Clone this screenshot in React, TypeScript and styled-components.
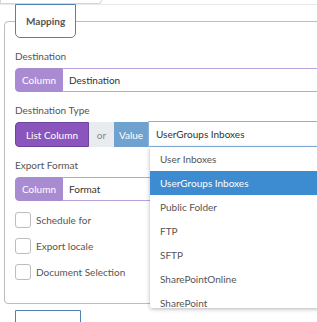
import styled, { createGlobalStyle } from "styled-components";

const GlobalStyle = createGlobalStyle`
    html, body {
        margin: 0;
        padding: 0;
        background: #fff;
        overflow: hidden;
    }
    body {
        font-family: Lato, "Open Sans", sans-serif;
        font-size: 10px;
        color: #555;
    }
`

const destinations = [
    "User Inboxes",
    "UserGroups Inboxes",
    "Public Folder",
    "FTP",
    "SFTP",
    "SharePointOnline",
    "SharePoint",
    "Dropbox",
]

export default function App() {
    return <Page>
        <GlobalStyle />
        <TopStrip>
            <PrevCard />
        </TopStrip>

        <Section>
            <Legend>Mapping</Legend>

            <Field>
                <Label>Destination</Label>
                <InputGroup>
                    <Addon>Column</Addon>
                    <TextInput>Destination</TextInput>
                </InputGroup>
            </Field>

            <Field>
                <Label>Destination Type</Label>
                <InputGroup $tall>
                    <ToggleButton $variant="list">List Column</ToggleButton>
                    <ToggleButton $variant="or">or</ToggleButton>
                    <ToggleButton $variant="value">Value</ToggleButton>
                    <SelectWrap>
                        <SelectBox>UserGroups Inboxes</SelectBox>
                        <Dropdown>
                            {destinations.map(d =>
                                <Option key={d} $active={d === "UserGroups Inboxes"}>{d}</Option>
                            )}
                        </Dropdown>
                    </SelectWrap>
                </InputGroup>
            </Field>

            <Field>
                <Label>Export Format</Label>
                <InputGroup>
                    <Addon>Column</Addon>
                    <TextInput>Format</TextInput>
                </InputGroup>
            </Field>

            <Checks>
                <CheckRow><Box /> Schedule for</CheckRow>
                <CheckRow><Box /> Export locale</CheckRow>
                <CheckRow><Box /> Document Selection</CheckRow>
            </Checks>
        </Section>

        <Section $next>
            <Legend>Advanced</Legend>
        </Section>
    </Page>
}

const Page = styled.div`
    width: 440px;
    padding-left: 4px;
`

const TopStrip = styled.div`
    height: 4px;
    margin-left: -4px;
    border-bottom: 1px solid #e8e8e8;
`

const PrevCard = styled.div`
    width: 100px;
    height: 3px;
    border: 1px solid #d6d6d6;
    border-top: none;
    border-radius: 0 0 4px 0;
`

const Section = styled.fieldset<{ $next?: boolean }>`
    margin: ${p => p.$next ? "6px 0 0" : "-1px 0 0"};
    padding: 0 10px 23px;
    border: 1px solid #bcbcbc;
    border-radius: 4px;
    min-width: 0;
`

const Legend = styled.legend`
    padding: 0 10px;
    height: 32px;
    line-height: 32px;
    font-size: 10px;
    font-weight: 700;
    color: #555;
    border: 1px solid #5282b0;
    border-radius: 0 0 5px 5px;
    background: #fff;
`

const Field = styled.div`
    margin-top: 10px;
`

const Label = styled.div`
    line-height: 16px;
    margin-bottom: 4px;
`

const InputGroup = styled.div<{ $tall?: boolean }>`
    display: flex;
    height: ${p => p.$tall ? "25px" : "24px"};
`

const Addon = styled.div`
    display: flex;
    align-items: center;
    padding: 0 6px;
    background: #a98bd2;
    border: 1px solid #a98bd2;
    border-radius: 4px 0 0 4px;
    color: #fff;
`

const TextInput = styled.div`
    flex: 1;
    display: flex;
    align-items: center;
    padding-left: 6px;
    border: 1px solid #b9a2dc;
    border-left: none;
    border-radius: 0 4px 4px 0;
    color: #333;
`

const toggleColors = {
    list: { bg: "#8a56be", border: "#6e44a0", color: "#fff", width: "74px" },
    or: { bg: "#e9ecef", border: "#e9ecef", color: "#888", width: "25px" },
    value: { bg: "#6fa2cf", border: "#6fa2cf", color: "#fff", width: "34px" },
}

const ToggleButton = styled.div<{ $variant: keyof typeof toggleColors }>`
    box-sizing: border-box;
    width: ${p => toggleColors[p.$variant].width};
    display: flex;
    align-items: center;
    justify-content: center;
    background: ${p => toggleColors[p.$variant].bg};
    border: 1px solid ${p => toggleColors[p.$variant].border};
    color: ${p => toggleColors[p.$variant].color};
    border-radius: ${p => p.$variant === "list" ? "4px 0 0 4px" : "0"};
`

const SelectWrap = styled.div`
    position: relative;
    flex: 1;
    margin-top: -1px;
`

const SelectBox = styled.div`
    height: 100%;
    box-sizing: border-box;
    display: flex;
    align-items: center;
    padding-left: 7px;
    border: 1px solid #86b4e2;
    border-radius: 0 4px 4px 0;
    color: #333;
`

const Dropdown = styled.div`
    position: absolute;
    top: 100%;
    left: 2px;
    width: 220px;
    max-height: 161px;
    overflow: hidden;
    background: #fff;
    border-radius: 0 0 3px 3px;
    box-shadow: 0 1px 4px rgba(0, 0, 0, 0.3);
    z-index: 2;
`

const Option = styled.div<{ $active?: boolean }>`
    height: 24px;
    line-height: 24px;
    padding-left: 10px;
    background: ${p => p.$active ? "#3d8bd0" : "#fff"};
    color: ${p => p.$active ? "#fff" : "#555"};
`

const Checks = styled.div`
    display: flex;
    flex-direction: column;
    gap: 10px;
    margin-top: 11px;
`

const CheckRow = styled.label`
    display: flex;
    align-items: center;
    gap: 5px;
    line-height: 16px;
`

const Box = styled.span`
    width: 14px;
    height: 14px;
    border: 1px solid #bdbdbd;
    border-radius: 3px;
    background: #fff;
`
